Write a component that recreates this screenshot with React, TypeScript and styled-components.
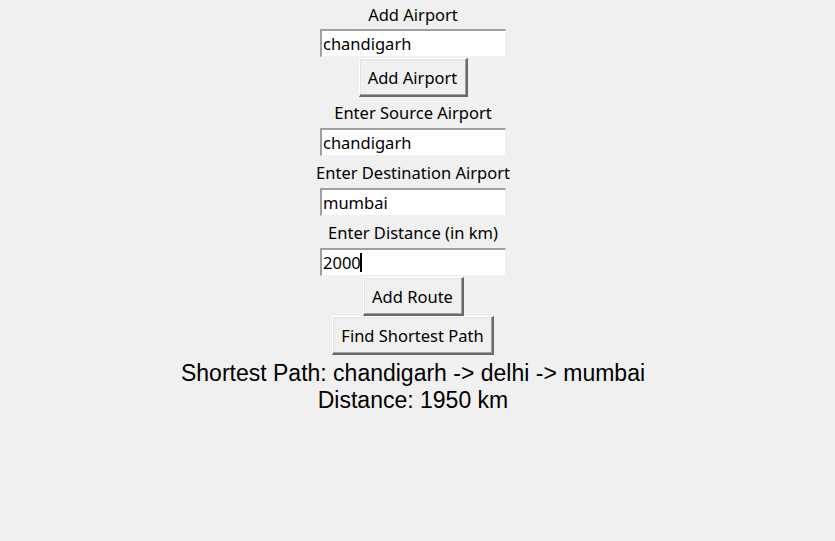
import React from "react";
import styled, { createGlobalStyle } from "styled-components";

const GlobalStyle = createGlobalStyle`
  html, body {
    margin: 0;
    padding: 0;
    background: #f0f0f0;
  }
  body {
    min-height: 100vh;
  }
`;

// the Tk window content is 826px wide, so everything centres at x=413
const Window = styled.div`
  display: flex;
  flex-direction: column;
  align-items: center;
  width: 826px;
  height: 541px;
  background: #f0f0f0;
  font-family: "Noto Sans", "Open Sans", sans-serif;
  color: #000;
`;

const Label = styled.div<{ $h: number }>`
  height: ${(p) => p.$h}px;
  display: flex;
  align-items: center;
  justify-content: center;
  font-size: 16.5px;
  white-space: nowrap;
`;

const EntryBox = styled.div`
  box-sizing: border-box;
  width: 186px;
  height: 28px;
  margin-bottom: 1px;
  display: flex;
  align-items: center;
  padding-left: 1px;
  background: #fff;
  border-top: 2px solid #a0a0a0;
  border-left: 2px solid #a0a0a0;
  border-right: 1px solid #f0f0f0;
  border-bottom: 1px solid #f0f0f0;
  font-size: 16.5px;
  white-space: nowrap;
`;

const Caret = styled.span`
  display: inline-block;
  width: 2px;
  height: 19px;
  background: #000;
  margin-left: -1px;
`;

const Button = styled.button<{ $w: number }>`
  box-sizing: border-box;
  width: ${(p) => p.$w}px;
  height: 39px;
  padding: 0;
  margin: 0;
  background: #f0f0f0;
  font-family: inherit;
  font-size: 16.5px;
  color: #000;
  border-top: 1px solid #fff;
  border-left: 1px solid #fff;
  border-right: 2px solid #696969;
  border-bottom: 2px solid #696969;
  box-shadow: inset -1px -1px 0 #a0a0a0, inset 1px 1px 0 #e3e3e3;
  white-space: nowrap;
`;

const Result = styled.div`
  margin-top: 5px;
  font-family: "Liberation Sans", Arial, sans-serif;
  font-size: 23px;
  line-height: 27px;
  text-align: center;
`;

const Entry = ({ value, caret }: { value: string; caret?: boolean }) => (
  <EntryBox>
    {value}
    {caret && <Caret />}
  </EntryBox>
);

export default function App() {
  return (
    <>
      <GlobalStyle />
      <Window>
        <Label $h={29}>Add Airport</Label>
        <Entry value="chandigarh" />
        <Button $w={109}>Add Airport</Button>
        <Label $h={31}>Enter Source Airport</Label>
        <Entry value="chandigarh" />
        <Label $h={31}>Enter Destination Airport</Label>
        <Entry value="mumbai" />
        <Label $h={31}>Enter Distance (in km)</Label>
        <Entry value="2000" caret />
        <Button $w={101}>Add Route</Button>
        <Button $w={162}>Find Shortest Path</Button>
        <Result>
          Shortest Path: chandigarh -&gt; delhi -&gt; mumbai
          <br />
          Distance: 1950 km
        </Result>
      </Window>
    </>
  );
}
